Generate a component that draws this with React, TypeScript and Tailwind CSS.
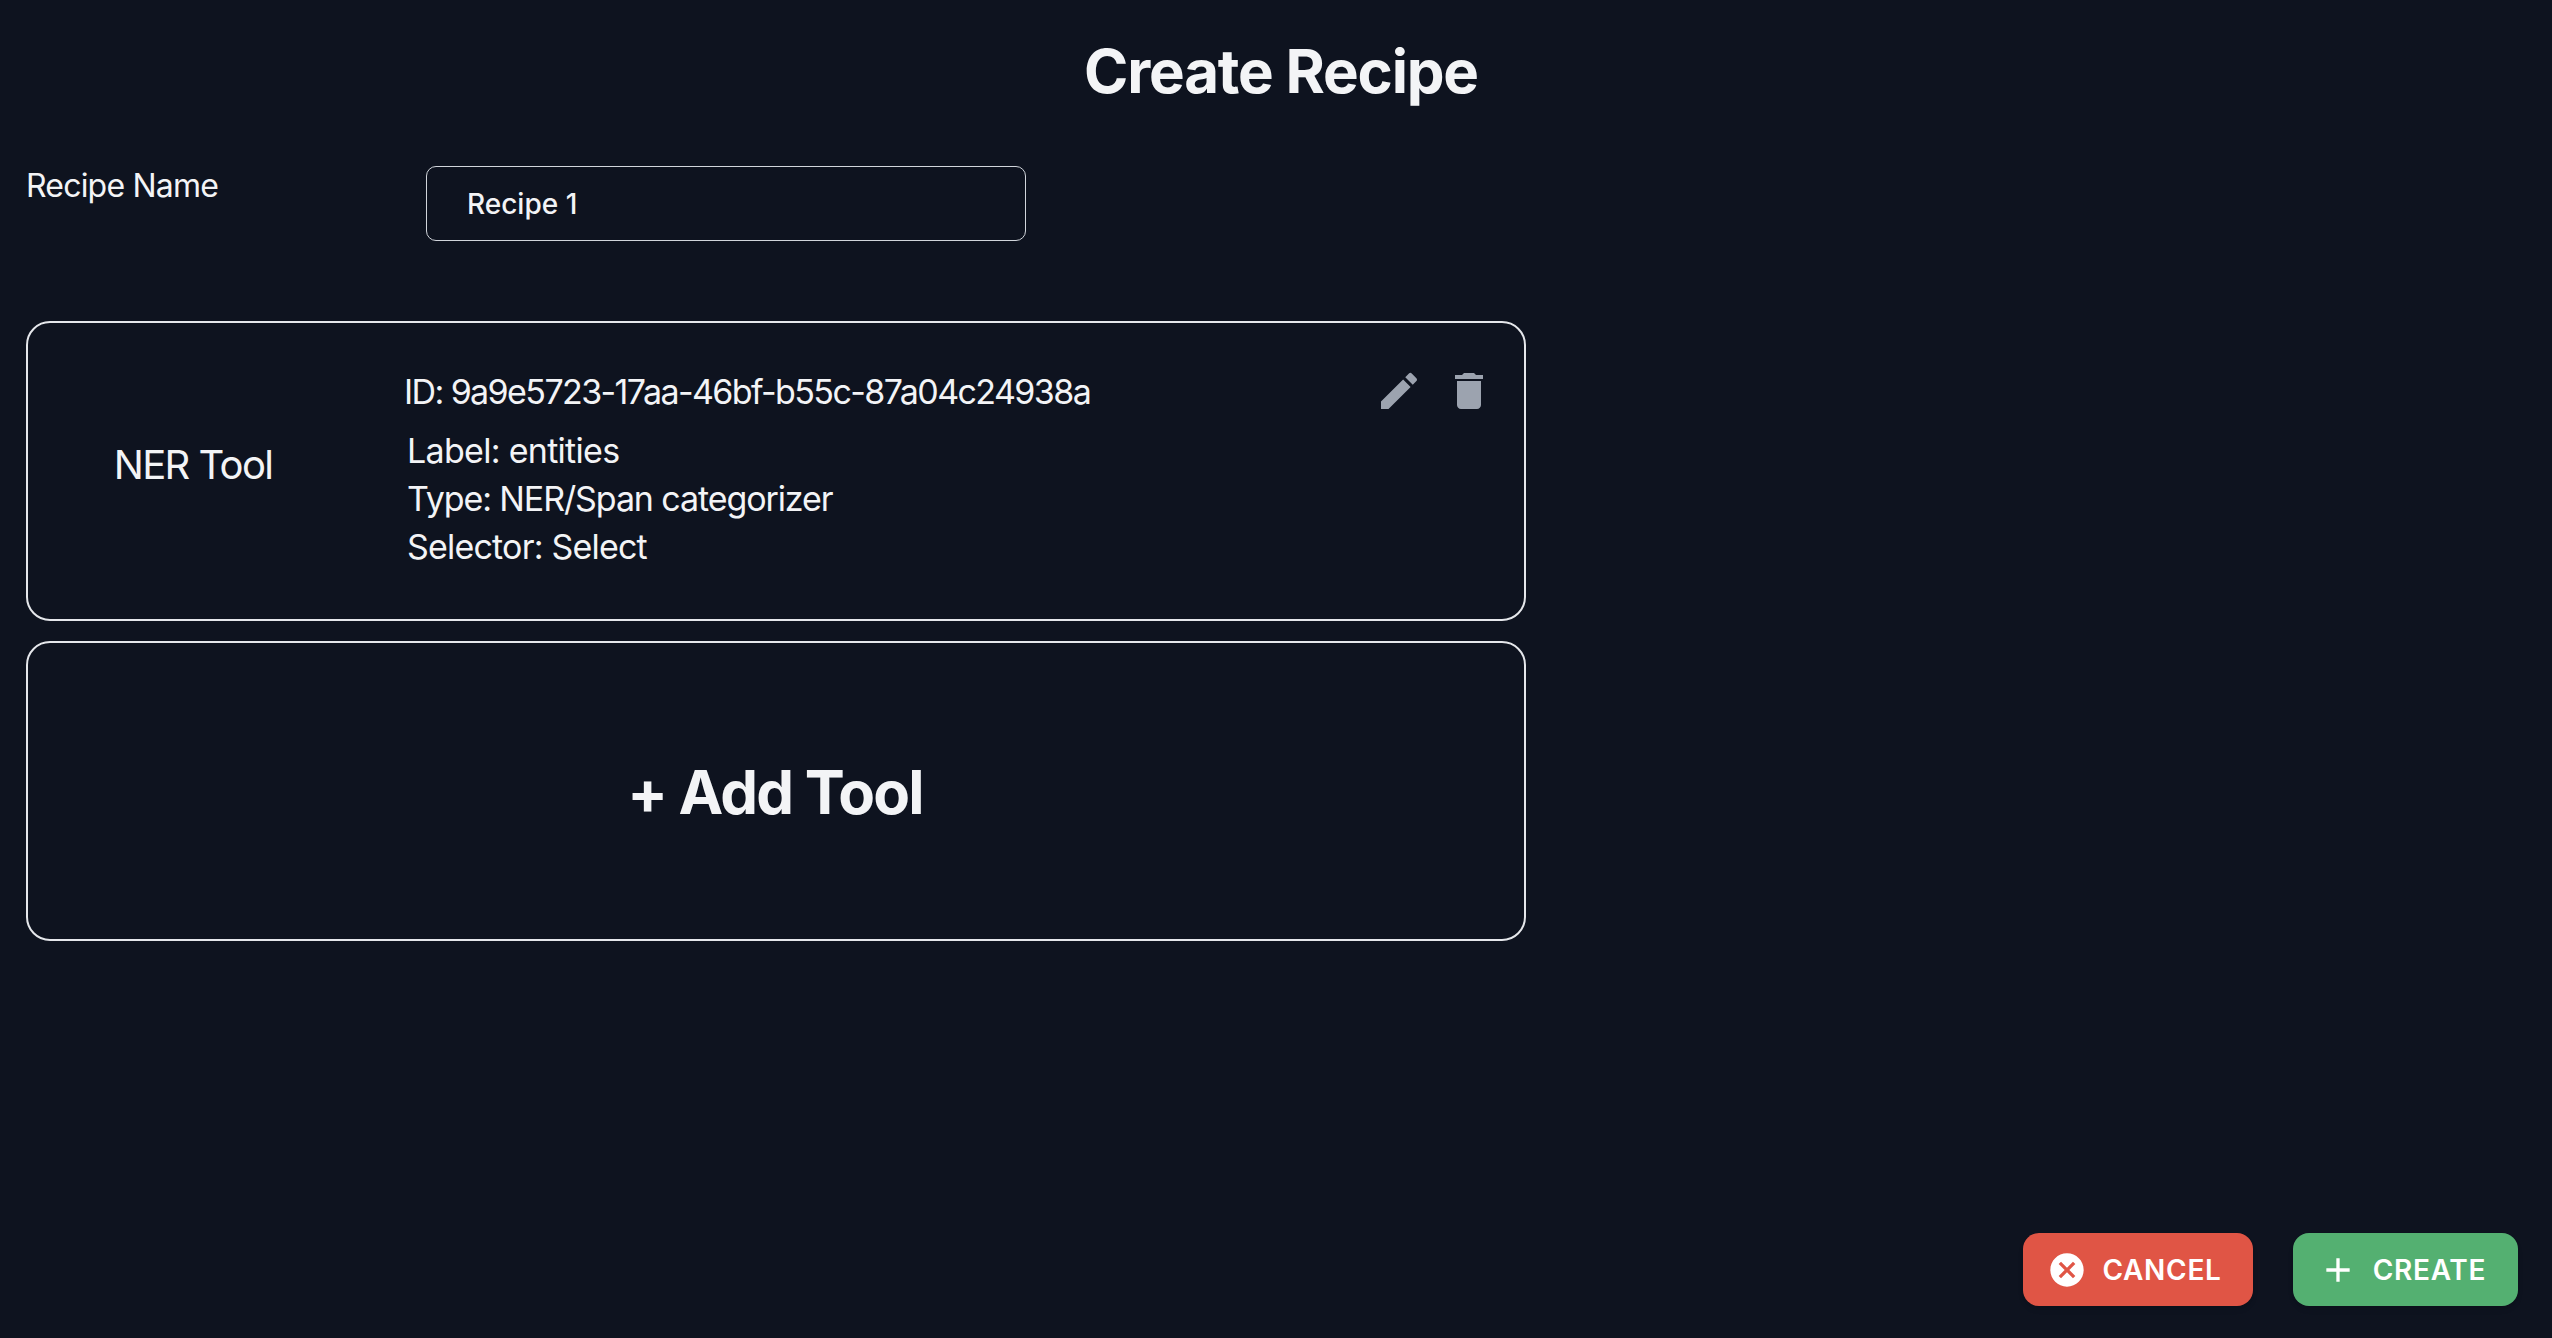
const ICONS = {
  edit: "M3 17.25V21h3.75L17.81 9.94l-3.75-3.75L3 17.25zM20.71 7.04c.39-.39.39-1.02 0-1.41l-2.34-2.34a.9959.9959 0 0 0-1.41 0l-1.83 1.83 3.75 3.75 1.83-1.83z",
  trash: "M6 19c0 1.1.9 2 2 2h8c1.1 0 2-.9 2-2V7H6v12zM19 4h-3.5l-1-1h-5l-1 1H5v2h14V4z",
  cancel:
    "M12 2C6.47 2 2 6.47 2 12s4.47 10 10 10 10-4.47 10-10S17.53 2 12 2zm5 13.59L15.59 17 12 13.41 8.41 17 7 15.59 10.59 12 7 8.41 8.41 7 12 10.59 15.59 7 17 8.41 13.41 12 17 15.59z",
  add: "M19 13h-6v6h-2v-6H5v-2h6V5h2v6h6v2z",
};

function Icon({ path, className }: { path: string; className: string }) {
  return (
    <svg viewBox="0 0 24 24" fill="currentColor" className={className}>
      <path d={path} />
    </svg>
  );
}

export default function App() {
  return (
    <div className="h-screen w-full bg-[#0e131f] text-[#f3f4f6] font-['Inter',sans-serif] flex flex-col overflow-hidden">
      {/* Title */}
      <h1 className="text-[60px] leading-[72px] font-bold tracking-[-1.2px] text-center pt-[35px] pl-[10px]">
        Create Recipe
      </h1>

      {/* Recipe name */}
      <div className="flex items-start pl-[26px] mt-[59px]">
        <label className="w-[400px] text-[32px] leading-10 tracking-[-0.8px]">Recipe Name</label>
        <div className="w-[600px] h-[75px] border-[1.5px] border-[#d1d5db] rounded-[10px] flex items-center pl-[40px] text-[28px] font-medium">
          Recipe 1
        </div>
      </div>

      {/* Tools */}
      <div className="w-[1500px] ml-[26px] mt-[80px] flex flex-col gap-[20px]">
        <div className="h-[300px] border-2 border-[#e5e7eb] rounded-[24px] flex relative">
          <div className="w-[330px] flex items-center justify-center pb-[12px] text-[40px] tracking-[-1.6px]">
            NER Tool
          </div>
          <div className="flex flex-col pt-[46px] ml-[46px] text-[34px]">
            <div className="leading-[46px] tracking-[-1.6px]">ID: 9a9e5723-17aa-46bf-b55c-87a04c24938a</div>
            <div className="ml-[3px] mt-[12px] text-[34px] leading-[48px]">
              <div className="tracking-[-0.7px]">Label: entities</div>
              <div className="tracking-[-1.1px]">Type: NER/Span categorizer</div>
              <div className="tracking-[-0.8px]">Selector: Select</div>
            </div>
          </div>
          <div className="absolute top-[44px] right-[31px] flex gap-[22px] text-[#9ca3af]">
            <Icon path={ICONS.edit} className="w-12 h-12" />
            <Icon path={ICONS.trash} className="w-12 h-12" />
          </div>
        </div>
        <div className="h-[300px] border-2 border-[#e5e7eb] rounded-[24px] flex items-center justify-center pt-[2px] pr-[2px] text-[60px] font-bold tracking-[-1.8px]">
          + Add Tool
        </div>
      </div>

      {/* Actions */}
      <div className="mt-auto flex justify-end gap-[40px] pr-[34px] pb-[32px]">
        <button className="h-[73px] w-[230px] rounded-2xl bg-[#e05545] text-white flex items-center justify-center gap-[15px] pr-[7px] text-[28px] font-semibold tracking-[0.7px] shadow-md">
          <Icon path={ICONS.cancel} className="w-10 h-10" />
          CANCEL
        </button>
        <button className="h-[73px] w-[225px] rounded-2xl bg-[#54b071] text-white flex items-center justify-center gap-[15px] pr-[7px] text-[28px] font-semibold tracking-[0.7px] shadow-md">
          <Icon path={ICONS.add} className="w-10 h-10" />
          CREATE
        </button>
      </div>
    </div>
  );
}
